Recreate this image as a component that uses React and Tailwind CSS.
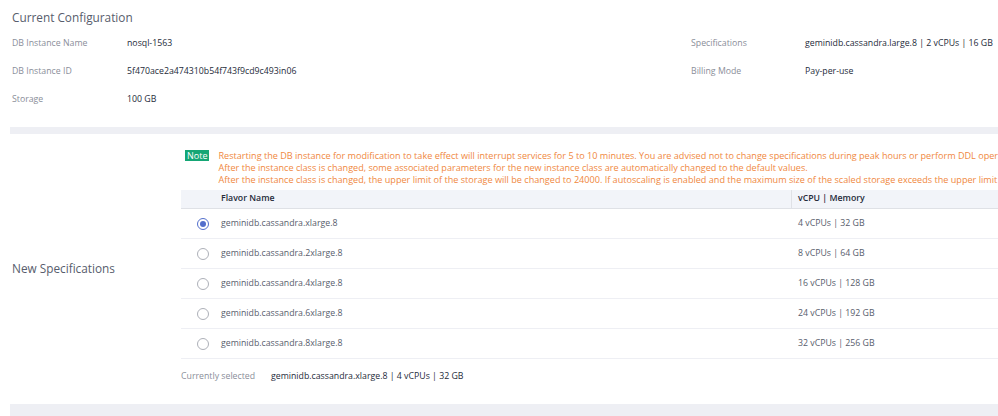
import React, { useState } from 'react';

const flavors = [
	{ name: 'geminidb.cassandra.xlarge.8', spec: '4 vCPUs | 32 GB' },
	{ name: 'geminidb.cassandra.2xlarge.8', spec: '8 vCPUs | 64 GB' },
	{ name: 'geminidb.cassandra.4xlarge.8', spec: '16 vCPUs | 128 GB' },
	{ name: 'geminidb.cassandra.6xlarge.8', spec: '24 vCPUs | 192 GB' },
	{ name: 'geminidb.cassandra.8xlarge.8', spec: '32 vCPUs | 256 GB' },
];

const InfoItem = ({ label, value, labelWidth = 'w-[114px]' }) => (
	<div className="flex items-center h-[28px] whitespace-nowrap">
		<span className={`${labelWidth} shrink-0 text-[#8a8e99]`}>{label}</span>
		<span className="text-[#252b3a]">{value}</span>
	</div>
);

const Radio = ({ checked }) => (
	<span
		className={`flex items-center justify-center w-[12px] h-[12px] rounded-full border ${
			checked ? 'border-[#526ecc]' : 'border-[#adb0b8]'
		}`}
	>
		{checked && <span className="w-[6px] h-[6px] rounded-full bg-[#526ecc]"></span>}
	</span>
);

const App = () => {
	const [selected, setSelected] = useState(0);
	const current = flavors[selected];

	return (
		<div className="w-[998px] h-[416px] overflow-hidden bg-white font-['Open_Sans',sans-serif] text-[8.75px]">
			<div className="ml-[10px]">
				{/* current configuration */}
				<div className="h-[127px] pt-[8px] pl-[2px]">
					<h2 className="text-[11.8px] leading-[18px] text-[#575d6c]">Current Configuration</h2>
					<div className="mt-[4px] flex">
						<div className="w-[679px] shrink-0">
							<InfoItem label="DB Instance Name" value="nosql-1563" labelWidth="w-[115px]" />
							<InfoItem label="DB Instance ID" value="5f470ace2a474310b54f743f9cd9c493in06" labelWidth="w-[115px]" />
							<InfoItem label="Storage" value="100 GB" labelWidth="w-[115px]" />
						</div>
						<div>
							<InfoItem label="Specifications" value="geminidb.cassandra.large.8 | 2 vCPUs | 16 GB" />
							<InfoItem label="Billing Mode" value="Pay-per-use" />
						</div>
					</div>
				</div>

				<div className="h-[7px] bg-[#eeeff4]"></div>

				{/* new specifications */}
				<div className="h-[270px] grid grid-cols-[171px_1fr] items-center">
					<div className="pl-[2px] text-[11.8px] text-[#575d6c]">New Specifications</div>
					<div className="self-start pt-[16px] overflow-hidden">
						<div className="flex items-start pl-[4px] whitespace-nowrap">
							<span className="px-[2px] h-[11px] leading-[11px] bg-[#15a675] text-white text-[9px]">Note</span>
							<div className="ml-[9px] leading-[12px] text-[9.1px] text-[#f0883e]">
								<p>Restarting the DB instance for modification to take effect will interrupt services for 5 to 10 minutes. You are advised not to change specifications during peak hours or perform DDL operations.</p>
								<p>After the instance class is changed, some associated parameters for the new instance class are automatically changed to the default values.</p>
								<p>After the instance class is changed, the upper limit of the storage will be changed to 24000. If autoscaling is enabled and the maximum size of the scaled storage exceeds the upper limit of the storage, autoscaling will fail.</p>
							</div>
						</div>

						<div className="mt-[4px] w-[900px]">
							<div className="flex h-[19px] items-center bg-[#f2f4f9] border-b border-[#dfe1e6] font-semibold text-[#252b3a]">
								<div className="w-[610px] pl-[40px]">Flavor Name</div>
								<div className="h-full border-l border-[#dfe1e6] pl-[6px] flex items-center">vCPU | Memory</div>
							</div>
							{flavors.map((f, i) => (
								<div
									key={f.name}
									onClick={() => setSelected(i)}
									className="flex h-[30px] items-center border-b border-[#eeeff4] text-[#575d6c] cursor-pointer"
								>
									<div className="w-[610px] flex items-center pl-[16px]">
										<Radio checked={selected === i} />
										<span className="ml-[12px]">{f.name}</span>
									</div>
									<div className="pl-[7px]">{f.spec}</div>
								</div>
							))}
						</div>

						<div className="mt-[11px] flex">
							<span className="w-[90px] text-[#8a8e99]">Currently selected</span>
							<span className="text-[#252b3a]">
								{current.name} | {current.spec}
							</span>
						</div>
					</div>
				</div>

				<div className="h-[12px] bg-[#eeeff4]"></div>
			</div>
		</div>
	);
};

export default App;
